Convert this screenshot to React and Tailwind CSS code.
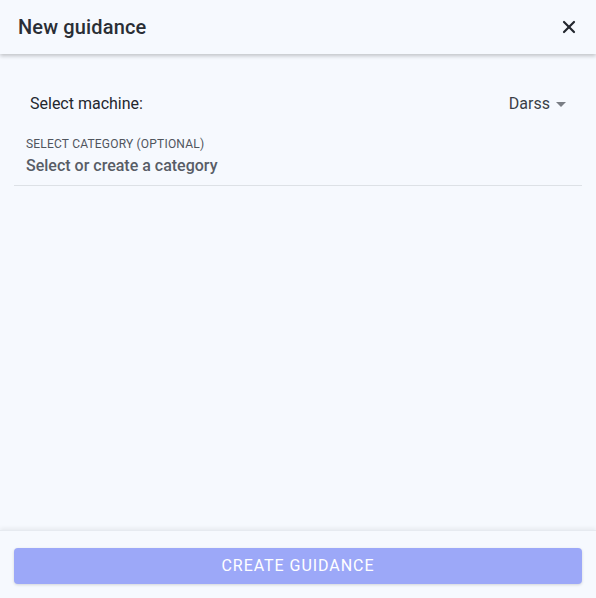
import { X } from "lucide-react";

export default function App() {
    return (
        <div className="w-[596px] h-[598px] flex flex-col bg-[#f6f9fe] font-['Roboto',sans-serif] overflow-hidden">
            <header className="h-[54px] shrink-0 flex items-center justify-between pl-[18px] pr-[17px] bg-[#f6f9fe] shadow-[0_2px_4px_rgba(0,0,0,0.22)] relative z-10">
                <h2 className="text-[20px] font-medium text-[#2a2e35] tracking-[0.15px]">New guidance</h2>
                <button className="text-[#23272e]">
                    <X size={20} strokeWidth={2.6} />
                </button>
            </header>

            <main className="flex-1 px-[14px] pt-[31px]">
                <div className="flex items-center justify-between px-4 h-[38px]">
                    <span className="text-[16px] text-[#23272e]">Select machine:</span>
                    <button className="flex items-center gap-[6px] text-[16px] text-[#3a3f47]">
                        Darss
                        <span className="w-0 h-0 border-l-[5px] border-r-[5px] border-t-[5px] border-l-transparent border-r-transparent border-t-[#7a7e85]" />
                    </button>
                </div>
                <div className="mt-[14px] pl-3 pb-[9px] border-b border-[#dde1e6]">
                    <p className="text-[12px] text-[#50555d] tracking-[0.2px] leading-[14px]">SELECT CATEGORY (OPTIONAL)</p>
                    <p className="mt-[5px] text-[16px] font-medium text-[#585d66] leading-[20px]">Select or create a category</p>
                </div>
            </main>

            <footer className="h-[68px] shrink-0 px-[14px] pt-[17px] bg-[#f6f9fe] shadow-[0_-2px_4px_rgba(0,0,0,0.06)] border-t border-[#e6eaf0]">
                <button className="w-full h-[36px] rounded-[4px] bg-[#9ca8f8] text-white text-[16px] tracking-[0.95px] shadow-[0_1px_3px_rgba(0,0,0,0.15)]">
                    CREATE GUIDANCE
                </button>
            </footer>
        </div>
    );
}
